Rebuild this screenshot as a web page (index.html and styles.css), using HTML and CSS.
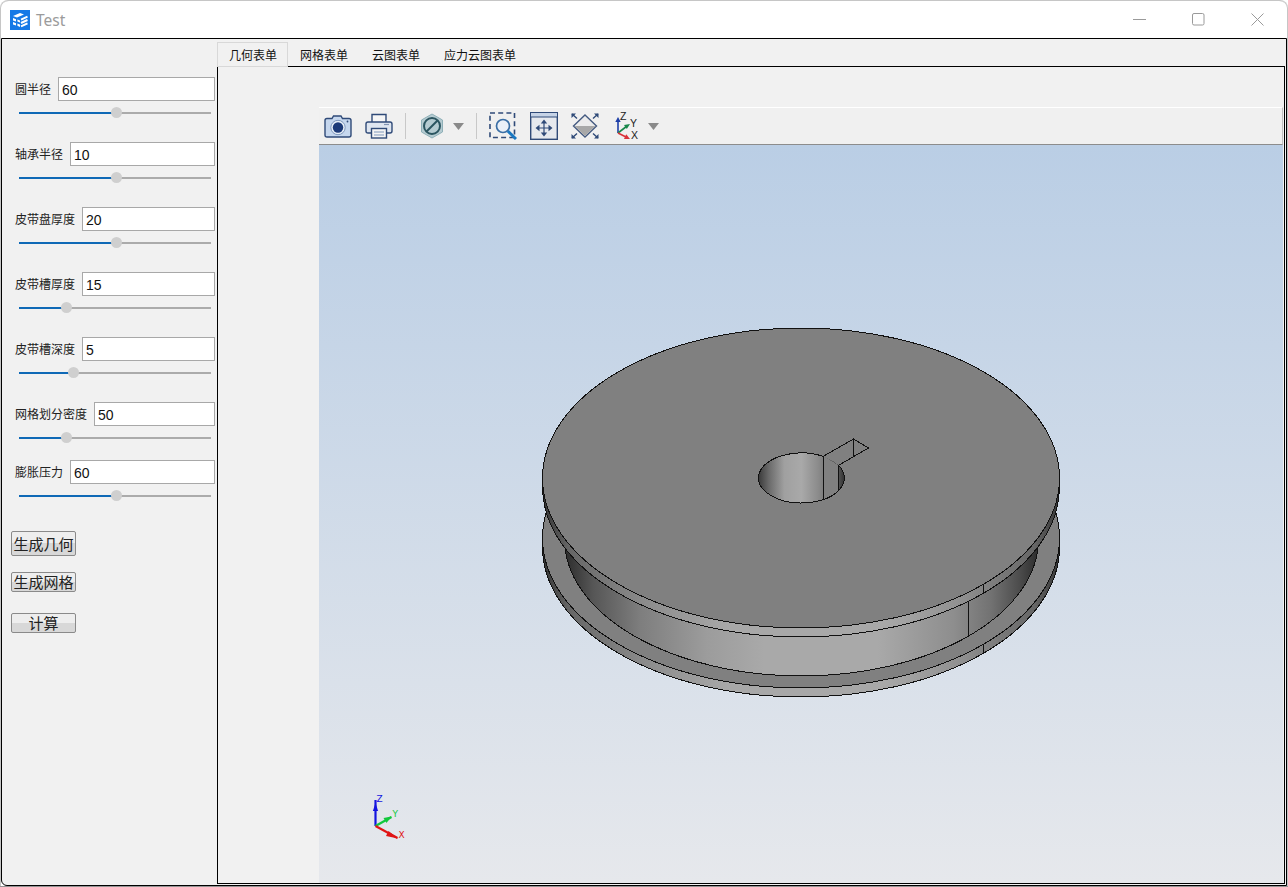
FILE: index.html
```html
<!DOCTYPE html>
<html lang="zh">
<head>
<meta charset="utf-8">
<title>Test</title>
<link rel="stylesheet" href="styles.css">
</head>
<body>
<div class="window">
  <header class="titlebar">
    <svg class="logo" viewBox="0 0 20 20">
      <rect width="20" height="20" fill="#1579e6"/>
      <path d="M3 6 L10 3 L14 4.5 L7 7.5 Z M3 8 L6 9.2 V11.6 L3 10.4 Z M3 12 L6 13.2 V15.6 L3 14.4 Z M7.4 9.6 L10 10.6 V12.6 L7.4 11.6 Z M7.4 13.4 L10 14.6 V17 L7.4 15.8 Z" fill="#fff"/>
      <path d="M11 9.6 L17.5 6.6 M11 13 L17.5 10 M11 16.4 L17.5 13.4" stroke="#fff" stroke-width="2" fill="none"/>
    </svg>
    <span class="title">Test</span>
    <div class="controls">
      <svg class="ctl" viewBox="0 0 13 13"><path d="M0 6.5 H13" stroke="#9a9a9a" fill="none"/></svg>
      <svg class="ctl" viewBox="0 0 13 13"><rect x="0.5" y="0.5" width="11.5" height="11.5" rx="1.5" stroke="#9a9a9a" fill="none"/></svg>
      <svg class="ctl" viewBox="0 0 13 13"><path d="M0.5 0.5 L12.5 12.5 M12.5 0.5 L0.5 12.5" stroke="#9a9a9a" fill="none"/></svg>
    </div>
  </header>

  <main class="content">
    <aside class="sidebar">
      <section class="row">
        <div class="field"><label class="label">圆半径</label><div class="input">60</div></div>
        <div class="slider"><div class="fill" style="width:97px"></div><div class="thumb"></div><div class="rest"></div></div>
      </section>
      <section class="row">
        <div class="field"><label class="label">轴承半径</label><div class="input">10</div></div>
        <div class="slider"><div class="fill" style="width:97px"></div><div class="thumb"></div><div class="rest"></div></div>
      </section>
      <section class="row">
        <div class="field"><label class="label">皮带盘厚度</label><div class="input">20</div></div>
        <div class="slider"><div class="fill" style="width:97px"></div><div class="thumb"></div><div class="rest"></div></div>
      </section>
      <section class="row">
        <div class="field"><label class="label">皮带槽厚度</label><div class="input">15</div></div>
        <div class="slider"><div class="fill" style="width:47px"></div><div class="thumb"></div><div class="rest"></div></div>
      </section>
      <section class="row">
        <div class="field"><label class="label">皮带槽深度</label><div class="input">5</div></div>
        <div class="slider"><div class="fill" style="width:54px"></div><div class="thumb"></div><div class="rest"></div></div>
      </section>
      <section class="row row-short">
        <div class="field"><label class="label">网格划分密度</label><div class="input">50</div></div>
        <div class="slider"><div class="fill" style="width:47px"></div><div class="thumb"></div><div class="rest"></div></div>
      </section>
      <section class="row row-last">
        <div class="field"><label class="label">膨胀压力</label><div class="input">60</div></div>
        <div class="slider"><div class="fill" style="width:97px"></div><div class="thumb"></div><div class="rest"></div></div>
      </section>
      <div class="actions">
        <button class="btn btn-tall">生成几何</button>
        <button class="btn">生成网格</button>
        <button class="btn">计算</button>
      </div>
    </aside>

    <div class="tabs">
      <nav class="tabbar">
        <span class="tab tab-active">几何表单</span>
        <span class="tab">网格表单</span>
        <span class="tab">云图表单</span>
        <span class="tab">应力云图表单</span>
      </nav>
      <div class="pane">
        <div class="viewer">
          <div class="toolbar">
            <svg class="icon i-camera" viewBox="0 0 28 24">
              <path d="M3 4.5 H8 L9.5 2 H17 L18.5 4.5 H25 Q27 4.5 27 6.5 V21 Q27 23 25 23 H3 Q1 23 1 21 V6.5 Q1 4.5 3 4.5 Z" fill="#c6d7ee" stroke="#2f4a78" stroke-width="1.4"/>
              <circle cx="14" cy="13.5" r="7.2" fill="#e8eff8" stroke="#7f97bb"/>
              <circle cx="14" cy="13.5" r="5.2" fill="#1d3a78"/>
              <circle cx="23.5" cy="7.5" r="0.9" fill="#2f4a78"/>
            </svg>
            <svg class="icon i-printer" viewBox="0 0 28 26">
              <path d="M7 9 V1.5 H21 V9" fill="#f6f6f6" stroke="#2f4a78" stroke-width="1.4"/>
              <path d="M6 20 H3 Q1 20 1 18 V11 Q1 9 3 9 H25 Q27 9 27 11 V18 Q27 20 25 20 H22" fill="#dfe6f0" stroke="#2f4a78" stroke-width="1.4"/>
              <path d="M19 11.5 H24" stroke="#8194b3" stroke-width="1.2"/>
              <rect x="6.5" y="15.5" width="15" height="9.5" fill="#f4f4f4" stroke="#2f4a78" stroke-width="1.4"/>
              <path d="M9 19 H19 M9 22 H19" stroke="#7f97bb" stroke-width="1.2"/>
            </svg>
            <div class="sep sep-a"></div>
            <svg class="icon i-hex" viewBox="0 0 24 26">
              <path d="M12 1 L22.5 7 V19 L12 25 L1.5 19 V7 Z" fill="#b5cbd1" stroke="#8fb0b8"/>
              <circle cx="12" cy="13" r="8" fill="none" stroke="#2b5560" stroke-width="2"/>
              <path d="M6.5 18.5 L17.5 7.5" stroke="#2b5560" stroke-width="2"/>
            </svg>
            <svg class="icon i-arrow arrow-a" viewBox="0 0 11 7"><path d="M0 0 H11 L5.5 7 Z" fill="#8a8a8a"/></svg>
            <div class="sep sep-b"></div>
            <svg class="icon i-zoom" viewBox="0 0 28 28">
              <rect x="1" y="1" width="24.5" height="24.5" fill="none" stroke="#2f4a78" stroke-width="1.6" stroke-dasharray="5 3.2"/>
              <circle cx="14" cy="14" r="6.5" fill="#eaf0f8" stroke="#3a6ea5" stroke-width="1.7"/>
              <path d="M18.8 19 L27 27" stroke="#1a78c2" stroke-width="3"/>
            </svg>
            <svg class="icon i-fit" viewBox="0 0 28 28">
              <rect x="0.7" y="0.7" width="26.6" height="26.6" fill="#e6e9ee" stroke="#2f4a78" stroke-width="1.4"/>
              <rect x="1" y="1" width="26" height="4" fill="#c6d3e6"/>
              <path d="M1 5 H27" stroke="#2f4a78"/>
              <path d="M14 10 V22 M8 16 H20" stroke="#2f4a78" stroke-width="1.2"/>
              <path d="M14 7.5 L10.8 11.5 H17.2 Z M14 24.5 L10.8 20.5 H17.2 Z M5.5 16 L9.5 12.8 V19.2 Z M22.5 16 L18.5 12.8 V19.2 Z" fill="#2f4a78"/>
            </svg>
            <svg class="icon i-diamond" viewBox="0 0 28 26">
              <path d="M14 2 L25.5 13 L14 24 L2.5 13 Z" fill="#ececec" stroke="#445a80" stroke-width="1.4"/>
              <path d="M3.5 13 H24.5 L14 23 Z" fill="#a8a8a8"/>
              <path d="M1 1 L6 5.5 M27 1 L22 5.5 M1 25 L6 20.5 M27 25 L22 20.5" stroke="#2f4a78" stroke-width="1.4"/>
              <path d="M0.5 0.5 H5 L0.5 5 Z M27.5 0.5 H23 L27.5 5 Z M0.5 25.5 H5 L0.5 21 Z M27.5 25.5 H23 L27.5 21 Z" fill="#2f4a78"/>
            </svg>
            <svg class="icon i-axes" viewBox="0 -3 28 34">
              <path d="M3 21 V8" stroke="#1e3fa8" stroke-width="1.6"/>
              <path d="M3 5 L0.3 10 H5.7 Z" fill="#1e3fa8"/>
              <path d="M3 21 L12 14" stroke="#18874a" stroke-width="1.6"/>
              <path d="M15 12 L9 13 L11.8 17 Z" fill="#18874a"/>
              <path d="M3 21 L12 25.5" stroke="#d9343a" stroke-width="1.6"/>
              <path d="M15 27 L9 27 L11.2 22.3 Z" fill="#d9343a"/>
              <text class="axis-mini" x="5" y="7.5">Z</text>
              <text class="axis-mini" x="15" y="15">Y</text>
              <text class="axis-mini" x="16" y="27">X</text>
            </svg>
            <svg class="icon i-arrow arrow-b" viewBox="0 0 11 7"><path d="M0 0 H11 L5.5 7 Z" fill="#8a8a8a"/></svg>
          </div>
          <div class="canvas">
            <svg class="scene" viewBox="319 145 963 738">
              <defs>
                <linearGradient id="rim" gradientUnits="userSpaceOnUse" x1="542" y1="0" x2="1060" y2="0">
                  <stop offset="0" stop-color="#333"/>
                  <stop offset="0.05" stop-color="#666"/>
                  <stop offset="0.2" stop-color="#8c8c8c"/>
                  <stop offset="0.36" stop-color="#a8a8a8"/>
                  <stop offset="0.66" stop-color="#a8a8a8"/>
                  <stop offset="0.8" stop-color="#929292"/>
                  <stop offset="0.95" stop-color="#666"/>
                  <stop offset="1" stop-color="#333"/>
                </linearGradient>
                <linearGradient id="groove" gradientUnits="userSpaceOnUse" x1="564" y1="0" x2="1038" y2="0">
                  <stop offset="0" stop-color="#2c2c2c"/>
                  <stop offset="0.06" stop-color="#565656"/>
                  <stop offset="0.16" stop-color="#7e7e7e"/>
                  <stop offset="0.3" stop-color="#9c9c9c"/>
                  <stop offset="0.42" stop-color="#a9a9a9"/>
                  <stop offset="0.66" stop-color="#a9a9a9"/>
                  <stop offset="0.82" stop-color="#8e8e8e"/>
                  <stop offset="0.9" stop-color="#727272"/>
                  <stop offset="0.96" stop-color="#4c4c4c"/>
                  <stop offset="1" stop-color="#2c2c2c"/>
                </linearGradient>
                <linearGradient id="hole" gradientUnits="userSpaceOnUse" x1="758" y1="0" x2="844" y2="0">
                  <stop offset="0" stop-color="#3a3a3a"/>
                  <stop offset="0.12" stop-color="#6a6a6a"/>
                  <stop offset="0.3" stop-color="#a0a0a0"/>
                  <stop offset="0.5" stop-color="#a9a9a9"/>
                  <stop offset="0.7" stop-color="#8a8a8a"/>
                  <stop offset="0.93" stop-color="#555"/>
                  <stop offset="1" stop-color="#303030"/>
                </linearGradient>
              </defs>
              <g stroke="#111" stroke-width="1" shape-rendering="crispEdges">
                <path d="M542 538 V547 A258.5 150 0 0 0 1059 547 V538 Z" fill="url(#rim)"/>
                <ellipse cx="800.5" cy="538" rx="258.5" ry="150" fill="#808080"/>
                <path d="M564 490 V539 A237 137 0 0 0 1038 539 V490 Z" fill="url(#groove)"/>
                <path d="M542 478 V487 A258.5 150 0 0 0 1059 487 V478 Z" fill="url(#rim)"/>
                <ellipse cx="800.5" cy="478" rx="258.5" ry="150" fill="#808080"/>
                <ellipse cx="801" cy="478" rx="43" ry="25" fill="url(#hole)" stroke="none"/>
                <path d="M822.7 456.4 L838 465.3 V490.7 Q831 496 822.7 499.6 Z" fill="#808080" stroke="none"/>
                <path d="M838 465.3 A43 25 0 1 1 822.7 456.4" fill="none"/>
                <path d="M822.7 456.4 L853 439 L868 448 L838 465.3 V490.7 M822.7 456.4 V499.6 M853 439 V456.6" fill="none"/>
                <path d="M968 602 V637 M983 584.7 V593.7 M983 644.7 V653.7" fill="none"/>
              </g>
              <g>
                <path d="M375 826 V800" stroke="#1414e0" stroke-width="2.2"/>
                <path d="M375 803 L372.4 811 H377.6 Z" fill="#1414e0"/>
                <path d="M375 826 L391 817" stroke="#12c83c" stroke-width="2.2"/>
                <path d="M391 816.5 L383 818 L386 823 Z" fill="#12c83c"/>
                <path d="M375 826 L397 838" stroke="#e01414" stroke-width="2.2"/>
                <path d="M397.5 838.5 L388 831 L385.5 836 Z" fill="#e01414"/>
                <text class="axis axis-z" x="376" y="802">Z</text>
                <text class="axis axis-y" x="392" y="817">Y</text>
                <text class="axis axis-x" x="398" y="838">X</text>
              </g>
            </svg>
          </div>
        </div>
      </div>
    </div>
  </main>
</div>
</body>
</html>
```

FILE: styles.css
```css
html, body {
  margin: 0;
  padding: 0;
}
body {
  width: 1288px;
  height: 887px;
  overflow: hidden;
  background: linear-gradient(#ffffff 0, #ffffff 860px, #949494 860px);
  font-family: "Noto Sans CJK SC", "Noto Sans", sans-serif;
}
.window {
  box-sizing: border-box;
  width: 1288px;
  height: 886px;
  display: flex;
  flex-direction: column;
  background: #fff;
  border-top: 1px solid #c6c6c6;
  border-radius: 8px 8px 0 0;
  box-shadow: inset 1px 0 0 #c6c6c6, inset -1px 0 0 #c6c6c6;
}
.titlebar {
  flex: none;
  height: 37px;
  display: flex;
  align-items: center;
  padding: 0 24px 0 10px;
}
.logo {
  width: 20px;
  height: 20px;
  display: block;
}
.title {
  margin-left: 6px;
  font-family: "Noto Sans", sans-serif;
  font-size: 15.5px;
  color: #9b9b9b;
}
.controls {
  margin-left: auto;
  display: flex;
  gap: 46px;
}
.ctl {
  width: 13px;
  height: 13px;
  display: block;
}
.content {
  flex: 1;
  min-height: 0;
  margin: 0 1px 0 1px;
  display: flex;
  border: 1px solid #000;
  background: #f1f1f1;
  border-radius: 0 0 0 6px;
}
.sidebar {
  flex: none;
  box-sizing: border-box;
  width: 215px;
  padding: 38px 2px 0 13px;
}
.row {
  height: 65px;
}
.row-short {
  height: 58px;
}
.row-last {
  height: 41px;
}
.field {
  height: 24px;
  display: flex;
  align-items: center;
  gap: 7px;
}
.label {
  padding-bottom: 2px;
  font-size: 12px;
  color: #222;
  white-space: nowrap;
}
.input {
  flex: 1;
  box-sizing: border-box;
  height: 24px;
  padding-left: 3px;
  background: #fff;
  border: 1px solid #a8a8a8;
  font-family: "Liberation Sans", sans-serif;
  font-size: 14px;
  line-height: 24px;
  color: #111;
}
.slider {
  height: 11px;
  margin: 6px 4px 0 4px;
  display: flex;
  align-items: center;
}
.fill {
  flex: none;
  height: 2px;
  background: #0f69b6;
}
.thumb {
  flex: none;
  width: 11px;
  height: 11px;
  margin: 0 -5.5px;
  border-radius: 50%;
  background: #cfcfcf;
  position: relative;
}
.rest {
  flex: 1;
  height: 2px;
  background: #ababab;
}
.actions {
  margin: 30px 0 0 -4px;
  display: flex;
  flex-direction: column;
  align-items: flex-start;
  gap: 21px;
}
.btn {
  box-sizing: border-box;
  width: 65px;
  height: 20px;
  margin: 0;
  padding: 0;
  border: 1px solid #8a8a8a;
  border-radius: 2px;
  background: linear-gradient(#eeeeee 0, #eeeeee 50%, #d8d8d8 50%, #d8d8d8 100%);
  font-family: "Noto Sans CJK SC", sans-serif;
  font-size: 15px;
  line-height: 18px;
  color: #222;
  overflow: hidden;
  white-space: nowrap;
}
.btn-tall {
  height: 25px;
  margin-bottom: -5px;
  line-height: 23px;
}
.tabs {
  flex: 1;
  min-width: 0;
  display: flex;
  flex-direction: column;
  padding: 0 1px 1px 0;
}
.tabbar {
  flex: none;
  height: 27px;
  display: flex;
  align-items: flex-end;
}
.tab {
  box-sizing: border-box;
  height: 24px;
  padding: 0 12px;
  font-size: 12px;
  line-height: 26px;
  color: #111;
  white-space: nowrap;
}
.tab-active {
  position: relative;
  height: 25px;
  width: 71px;
  margin-bottom: -1px;
  padding: 0 11px;
  background: #f1f1f1;
  border: 1px solid #d8d8d8;
  border-bottom: 1px solid #d8d8d8;
  line-height: 24px;
}
.pane {
  flex: 1;
  min-height: 0;
  border: 1px solid #000;
  padding: 40px 1px 0 101px;
  display: flex;
}
.viewer {
  flex: 1;
  min-width: 0;
  display: flex;
  flex-direction: column;
}
.toolbar {
  flex: none;
  box-sizing: border-box;
  height: 38px;
  padding-left: 5px;
  display: flex;
  align-items: center;
  background: #f0f0f0;
  border-top: 1px solid #fff;
  border-bottom: 1px solid #8c8c8c;
  border-right: 1px solid #c0c0c0;
}
.icon {
  flex: none;
  display: block;
}
.i-camera { width: 28px; height: 24px; }
.i-printer { width: 28px; height: 26px; margin-left: 13px; }
.i-hex { width: 24px; height: 26px; margin-left: 14px; }
.i-arrow { width: 11px; height: 7px; }
.arrow-a { margin-left: 9px; }
.arrow-b { margin-left: 5px; }
.i-zoom { width: 28px; height: 28px; margin-left: 12px; }
.i-fit { width: 28px; height: 28px; margin-left: 13px; }
.i-diamond { width: 28px; height: 26px; margin-left: 13px; }
.i-axes { width: 28px; height: 34px; margin-left: 16px; }
.sep {
  flex: none;
  width: 1px;
  height: 26px;
  background: #c8c8c8;
}
.sep-a { margin-left: 12px; }
.sep-b { margin-left: 12px; }
.canvas {
  flex: 1;
  min-height: 0;
  background: linear-gradient(#bacee5, #e6e8ec);
}
.scene {
  display: block;
  width: 100%;
  height: 100%;
}
.axis {
  font-family: "DejaVu Sans", sans-serif;
  font-size: 9px;
}
.axis-z { fill: #1414e0; }
.axis-y { fill: #12c83c; }
.axis-x { fill: #e01414; }
.axis-mini {
  font-family: "Liberation Sans", sans-serif;
  font-size: 10.5px;
  fill: #222;
}
```
